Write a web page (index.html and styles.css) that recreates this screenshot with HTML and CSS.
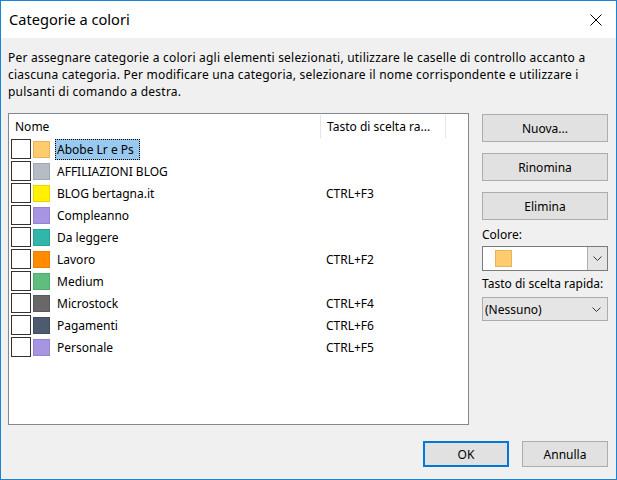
FILE: index.html
```html
<!DOCTYPE html>
<html lang="it">
<head>
    <meta charset="UTF-8">
    <title>Categorie a colori</title>
    <link rel="stylesheet" href="styles.css">
</head>
<body>
    <div class="window">
        <div class="titlebar">
            <span class="title">Categorie a colori</span>
            <svg class="close" width="12" height="12" viewBox="0 0 12 12">
                <path d="M0.5 0.5 L11.5 11.5 M11.5 0.5 L0.5 11.5" stroke="#000" stroke-width="1" fill="none"/>
            </svg>
        </div>

        <div class="content">
            <p class="desc">Per assegnare categorie a colori agli elementi selezionati, utilizzare le caselle di controllo accanto a ciascuna categoria. Per modificare una categoria, selezionare il nome corrispondente e utilizzare i pulsanti di comando a destra.</p>

            <div class="main">
                <div class="list">
                    <div class="list-head">
                        <div class="col-name">Nome</div>
                        <div class="col-key">Tasto di scelta ra...</div>
                        <div class="col-rest"></div>
                    </div>

                    <div class="row">
                        <span class="check"></span>
                        <span class="swatch c-orange"></span>
                        <span class="label selected">Abobe Lr e Ps</span>
                    </div>
                    <div class="row">
                        <span class="check"></span>
                        <span class="swatch c-gray"></span>
                        <span class="label">AFFILIAZIONI BLOG</span>
                        <span class="key"></span>
                    </div>
                    <div class="row">
                        <span class="check"></span>
                        <span class="swatch c-yellow"></span>
                        <span class="label">BLOG bertagna.it</span>
                        <span class="key">CTRL+F3</span>
                    </div>
                    <div class="row">
                        <span class="check"></span>
                        <span class="swatch c-purple"></span>
                        <span class="label">Compleanno</span>
                        <span class="key"></span>
                    </div>
                    <div class="row">
                        <span class="check"></span>
                        <span class="swatch c-teal"></span>
                        <span class="label">Da leggere</span>
                        <span class="key"></span>
                    </div>
                    <div class="row">
                        <span class="check"></span>
                        <span class="swatch c-dark-orange"></span>
                        <span class="label">Lavoro</span>
                        <span class="key">CTRL+F2</span>
                    </div>
                    <div class="row">
                        <span class="check"></span>
                        <span class="swatch c-green"></span>
                        <span class="label">Medium</span>
                        <span class="key"></span>
                    </div>
                    <div class="row">
                        <span class="check"></span>
                        <span class="swatch c-steel"></span>
                        <span class="label">Microstock</span>
                        <span class="key">CTRL+F4</span>
                    </div>
                    <div class="row">
                        <span class="check"></span>
                        <span class="swatch c-navy"></span>
                        <span class="label">Pagamenti</span>
                        <span class="key">CTRL+F6</span>
                    </div>
                    <div class="row">
                        <span class="check"></span>
                        <span class="swatch c-purple"></span>
                        <span class="label">Personale</span>
                        <span class="key">CTRL+F5</span>
                    </div>
                </div>

                <div class="side">
                    <button class="btn side-btn">Nuova...</button>
                    <button class="btn side-btn">Rinomina</button>
                    <button class="btn side-btn last">Elimina</button>

                    <div class="field-label">Colore:</div>
                    <div class="color-select">
                        <span class="color-value"><span class="swatch big c-orange"></span></span>
                        <span class="color-arrow">
                            <svg width="9" height="5" viewBox="0 0 9 5"><path d="M0.5 0.5 L4.5 4.5 L8.5 0.5" stroke="#333" fill="none"/></svg>
                        </span>
                    </div>

                    <div class="field-label">Tasto di scelta rapida:</div>
                    <div class="key-select">
                        <span>(Nessuno)</span>
                        <svg width="9" height="5" viewBox="0 0 9 5"><path d="M0.5 0.5 L4.5 4.5 L8.5 0.5" stroke="#333" fill="none"/></svg>
                    </div>
                </div>
            </div>

            <div class="footer">
                <button class="btn default">OK</button>
                <button class="btn">Annulla</button>
            </div>
        </div>
    </div>
</body>
</html>
```

FILE: styles.css
```css
body {
    margin: 0;
    font-family: "Noto Sans", sans-serif;
    font-size: 12px;
    color: #000;
}

.window {
    width: 617px;
    height: 480px;
    box-sizing: border-box;
    border: 1px solid #1883d7;
    background: #f0f0f0;
    display: flex;
    flex-direction: column;
}

.titlebar {
    height: 37px;
    flex: none;
    background: #fff;
    display: flex;
    align-items: center;
    justify-content: space-between;
    padding: 0 14px 0 8px;
}

.title {
    font-size: 14.6px;
    margin-top: -1px;
}

.close {
    margin-top: 1px;
}

.content {
    flex: 1;
    display: flex;
    flex-direction: column;
    padding: 11px 8px 0 7px;
}

.desc {
    margin: 0;
    line-height: 17px;
    letter-spacing: 0.22px;
}

.main {
    display: flex;
    margin-top: 13px;
}

/* list of categories */

.list {
    width: 462px;
    height: 312px;
    box-sizing: border-box;
    border: 1px solid #828790;
    background: #fff;
}

.list-head {
    display: flex;
    height: 24px;
    align-items: center;
}

.col-name {
    width: 305px;
    padding-left: 6px;
    border-right: 1px solid #e5e5e5;
    height: 23px;
    line-height: 23px;
}

.col-key {
    width: 118px;
    padding-left: 6px;
    border-right: 1px solid #e5e5e5;
    height: 23px;
    line-height: 23px;
}

.row {
    display: flex;
    align-items: center;
    height: 22px;
}

.check {
    width: 18px;
    height: 18px;
    border: 1px solid #333;
    background: #fff;
    margin-left: 2px;
}

.swatch {
    width: 15px;
    height: 15px;
    border: 1px solid;
    margin-left: 2px;
}

.label {
    width: 263px;
    padding: 2px 0 2px 7px;
    line-height: 17px;
}

.label.selected {
    width: auto;
    margin-left: 5px;
    padding: 1px 5px 1px 1px;
    background: #99c9ef;
    border: 1px dotted #000;
}

.key {
    padding-left: 6px;
}

.c-orange { background: #fecb6f; border-color: #e8b45a; }
.c-gray { background: #b6bcc6; border-color: #a2a8b2; }
.c-yellow { background: #fff100; border-color: #e8d800; }
.c-purple { background: #a895e2; border-color: #9582d0; }
.c-teal { background: #31b6a9; border-color: #28a497; }
.c-dark-orange { background: #ff8c00; border-color: #ea7e00; }
.c-green { background: #5fbe7d; border-color: #50ad6e; }
.c-steel { background: #686868; border-color: #5a5a5a; }
.c-navy { background: #4e5a6e; border-color: #414c5e; }

/* right column */

.side {
    margin-left: 13px;
    width: 126px;
    display: flex;
    flex-direction: column;
}

.btn {
    font-family: inherit;
    font-size: 12px;
    color: #000;
    background: #e1e1e1;
    border: 1px solid #adadad;
    padding: 0;
    height: 28px;
}

.side-btn {
    width: 126px;
    margin-top: 1px;
    margin-bottom: 10px;
}

.side-btn.last {
    margin-bottom: 7px;
}

.field-label {
    height: 16px;
    line-height: 16px;
}

.color-select {
    display: flex;
    height: 25px;
    box-sizing: border-box;
    border: 1px solid #7a7a7a;
    background: #fff;
    margin-top: 3px;
    margin-bottom: 5px;
}

.color-value {
    flex: 1;
    display: flex;
    align-items: center;
    padding-left: 10px;
}

.swatch.big {
    width: 15px;
    height: 15px;
}

.color-arrow {
    width: 19px;
    border-left: 1px solid #adadad;
    background: #e5e5e5;
    display: flex;
    align-items: center;
    justify-content: center;
}

.key-select {
    display: flex;
    align-items: center;
    justify-content: space-between;
    height: 24px;
    box-sizing: border-box;
    border: 1px solid #acacac;
    background: #e5e5e5;
    margin-top: 5px;
    padding: 0 6px 0 2px;
}

/* bottom buttons */

.footer {
    display: flex;
    justify-content: flex-end;
    gap: 13px;
    margin-top: 16px;
}

.footer .btn {
    width: 86px;
    height: 26px;
}

.btn.default {
    border: 2px solid #0078d7;
}
```
